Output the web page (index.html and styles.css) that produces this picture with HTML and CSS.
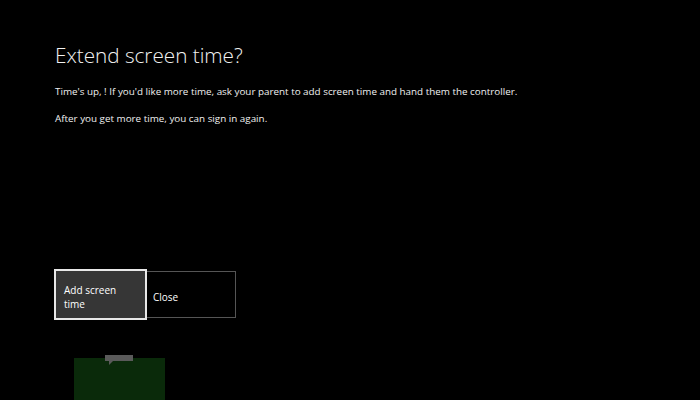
FILE: index.html
```html
<!DOCTYPE html>
<html>
<head>
<meta charset="utf-8">
<link rel="stylesheet" href="styles.css">
</head>
<body>
<div class="page">
  <h1 class="title">Extend screen time?</h1>
  <p class="text first">Time's up, ! If you'd like more time, ask your parent to add screen time and hand them the controller.</p>
  <p class="text">After you get more time, you can sign in again.</p>
  <div class="buttons">
    <div class="btn btn-focus">Add screen<br>time</div>
    <div class="btn btn-plain">Close</div>
  </div>
  <div class="tile">
    <div class="tab"></div>
  </div>
</div>
</body>
</html>
```
FILE: styles.css
```css
html, body {
  margin: 0;
  padding: 0;
  background: #000;
  width: 700px;
  height: 400px;
  overflow: hidden;
}
.page {
  font-family: "Open Sans", "Noto Sans", sans-serif;
  color: #fff;
  padding: 42px 0 0 55px;
  height: 358px;
  display: flex;
  flex-direction: column;
  align-items: flex-start;
}
.title {
  margin: 0;
  font-size: 20.7px;
  font-weight: 300;
  line-height: 26px;
  color: #f2f2f2;
}
.text {
  margin: 0;
  font-size: 9.85px;
  line-height: 14px;
  color: #f0f0f0;
}
.text.first {
  margin-top: 16px;
  margin-bottom: 13px;
}
.buttons {
  display: flex;
  margin-top: 144px;
  margin-left: -1px;
}
.btn {
  box-sizing: border-box;
  font-size: 10px;
  line-height: 14px;
  color: #fff;
  display: flex;
  align-items: center;
  padding-top: 4px;
}
.btn-focus {
  width: 93px;
  height: 51px;
  background: #363636;
  border: 2px solid #e8e8e8;
  padding-left: 8px;
}
.btn-plain {
  width: 89px;
  height: 47px;
  margin-top: 2px;
  border: 1px solid #555;
  border-left: none;
  padding-left: 6px;
}
.tile {
  position: relative;
  margin-top: 38px;
  margin-left: 19px;
  width: 91px;
  height: 42px;
  background: #0a2a0a;
}
.tab {
  position: absolute;
  left: 31px;
  top: -3px;
  width: 28px;
  height: 6px;
  background: #5a5a5a;
}
.tab::after {
  content: "";
  position: absolute;
  left: 4px;
  top: 6px;
  border-left: 4px solid #5a5a5a;
  border-bottom: 4px solid transparent;
}
```
